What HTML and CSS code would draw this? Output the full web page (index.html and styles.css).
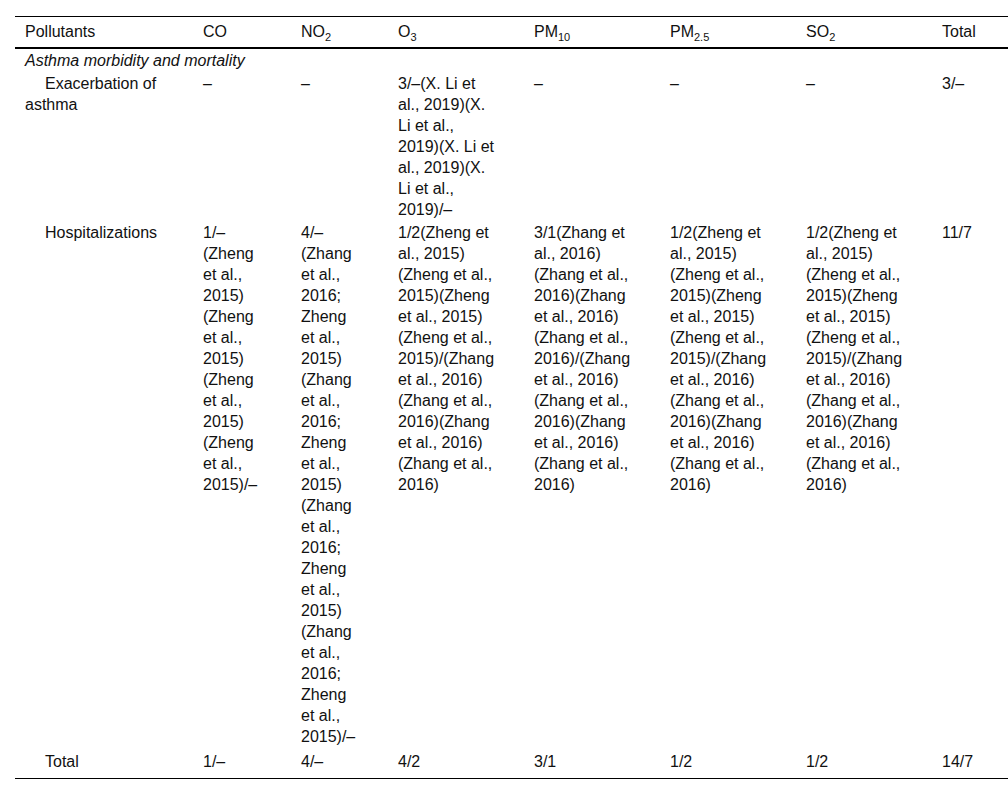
FILE: index.html
```html
<!DOCTYPE html>
<html>
<head>
<meta charset="utf-8">
<link rel="stylesheet" href="styles.css">
</head>
<body>
<div class="wrap">
<table class="tbl">
<colgroup>
<col class="c-name"><col class="c-co"><col class="c-no2"><col class="c-wide"><col class="c-wide"><col class="c-wide"><col class="c-wide"><col class="c-total">
</colgroup>
<thead>
<tr>
<th>Pollutants</th><th>CO</th><th>NO<sub>2</sub></th><th>O<sub>3</sub></th><th>PM<sub>10</sub></th><th>PM<sub>2.5</sub></th><th>SO<sub>2</sub></th><th>Total</th>
</tr>
</thead>
<tbody>
<tr><td class="section" colspan="8">Asthma morbidity and mortality</td></tr>
<tr>
<td class="ind">Exacerbation of asthma</td>
<td>–</td>
<td>–</td>
<td>3/–(X. Li et al., 2019)(X. Li et al., 2019)(X. Li et al., 2019)(X. Li et al., 2019)/–</td>
<td>–</td>
<td>–</td>
<td>–</td>
<td>3/–</td>
</tr>
<tr>
<td class="ind">Hospitalizations</td>
<td>1/– (Zheng et al., 2015) (Zheng et al., 2015) (Zheng et al., 2015) (Zheng et al., 2015)/–</td>
<td>4/– (Zhang et al., 2016; Zheng et al., 2015) (Zhang et al., 2016; Zheng et al., 2015) (Zhang et al., 2016; Zheng et al., 2015) (Zhang et al., 2016; Zheng et al., 2015)/–</td>
<td>1/2(Zheng et al., 2015) (Zheng et al., 2015)(Zheng et al., 2015) (Zheng et al., 2015)/(Zhang et al., 2016) (Zhang et al., 2016)(Zhang et al., 2016) (Zhang et al., 2016)</td>
<td>3/1(Zhang et al., 2016) (Zhang et al., 2016)(Zhang et al., 2016) (Zhang et al., 2016)/(Zhang et al., 2016) (Zhang et al., 2016)(Zhang et al., 2016) (Zhang et al., 2016)</td>
<td>1/2(Zheng et al., 2015) (Zheng et al., 2015)(Zheng et al., 2015) (Zheng et al., 2015)/(Zhang et al., 2016) (Zhang et al., 2016)(Zhang et al., 2016) (Zhang et al., 2016)</td>
<td>1/2(Zheng et al., 2015) (Zheng et al., 2015)(Zheng et al., 2015) (Zheng et al., 2015)/(Zhang et al., 2016) (Zhang et al., 2016)(Zhang et al., 2016) (Zhang et al., 2016)</td>
<td>11/7</td>
</tr>
<tr class="last">
<td class="ind">Total</td>
<td>1/–</td>
<td>4/–</td>
<td>4/2</td>
<td>3/1</td>
<td>1/2</td>
<td>1/2</td>
<td>14/7</td>
</tr>
</tbody>
</table>
</div>
</body>
</html>
```
FILE: styles.css
```css
html, body {
  margin: 0;
  padding: 0;
  background: #fff;
}
.wrap {
  padding: 16px 0 0 15px;
}
.tbl {
  border-collapse: collapse;
  table-layout: fixed;
  width: 993px;
  font-family: "Liberation Sans", Arial, sans-serif;
  font-size: 16px;
  line-height: 21px;
  color: #111;
}
.c-name { width: 178px; }
.c-co { width: 98px; }
.c-no2 { width: 97px; }
.c-wide { width: 136px; }
.c-total { width: 76px; }
.tbl th, .tbl td {
  text-align: left;
  vertical-align: top;
  padding: 1px 10px;
  font-weight: normal;
}
.tbl td:nth-child(2) { padding-right: 30px; }
.tbl td:nth-child(3) { padding-right: 30px; }
.tbl td:nth-child(4),
.tbl td:nth-child(5),
.tbl td:nth-child(6),
.tbl td:nth-child(7) { padding-right: 29px; }
.tbl thead tr {
  border-top: 1px solid #000;
  border-bottom: 2px solid #000;
}
.tbl thead th {
  padding-top: 4px;
  padding-bottom: 5px;
}
.tbl sub {
  font-size: 11px;
  line-height: 0;
  vertical-align: -4px;
}
.section {
  font-style: italic;
}
.ind {
  text-indent: 20px;
}
.tbl tr.last {
  border-bottom: 1px solid #000;
}
.tbl tr.last td {
  padding-top: 3px;
  padding-bottom: 6px;
}
```
